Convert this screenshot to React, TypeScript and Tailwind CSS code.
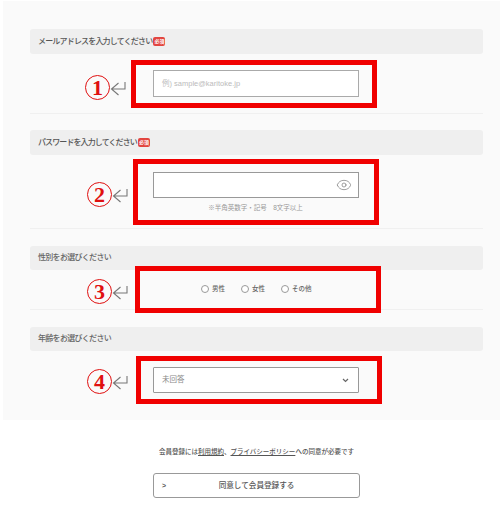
import React from "react";
import { Eye } from "lucide-react";

const font = { fontFamily: '"Liberation Sans", "Noto Sans CJK JP", sans-serif' };

// red annotation frame + circled number + return arrow drawn over a form row
const Marker = ({ num, top, numTop, frameLeft, frameHeight, numLeft }: { num: number; top: number; numTop: number; frameLeft: number; frameHeight: number; numLeft: number }) => (
  <>
    <div
      className="absolute w-[246px] border-[5px] border-[#f00000] pointer-events-none"
      style={{ top, left: frameLeft, height: frameHeight }}
    />
    <div className="absolute flex items-center" style={{ top: numTop, left: numLeft }}>
      <span
        className="flex h-[25px] w-[25px] items-center justify-center rounded-full border-[1.5px] border-[#e01010] text-[22px] font-bold leading-none text-[#e01010]"
        style={{ fontFamily: '"Liberation Serif", serif' }}
      >
        {num}
      </span>
      <svg width="16" height="15" viewBox="0 0 16 15" fill="none" stroke="#777" strokeWidth="1.1" className="mt-[2px]">
        <path d="M15 1v7H1.5M8.500 2 1.500 8l7 6" />
      </svg>
    </div>
  </>
);

const Required = () => (
  <span className="ml-[1px] inline-flex h-[9px] w-[12px] items-center justify-center rounded-[2px] bg-[#e2453f] text-[5px] font-bold leading-none tracking-normal text-white">
    必須
  </span>
);

const Head = ({ children, className = "" }: { children: React.ReactNode; className?: string }) => (
  <div className={"flex items-center rounded-[3px] bg-[#efefef] pl-[8px] text-[8px] font-medium " + className}>
    {children}
  </div>
);

const Radio = ({ label, className = "" }: { label: string; className?: string }) => (
  <label className={"flex items-center gap-[3px] " + className}>
    <span className="h-[8px] w-[8px] rounded-full border border-[#999] bg-white" />
    <span>{label}</span>
  </label>
);

export default function App() {
  return (
    <div className="relative h-[507px] w-[500px] overflow-hidden bg-white" style={font}>
      {/* form panel */}
      <div className="ml-[3px] mt-[1px] h-[419px] bg-[#fafafa] pl-[27px] pr-[17px] pt-[28px]">
        {/* mail */}
        <Head className="h-[25px] tracking-[-0.82px] text-[#555]">
          メールアドレスを入力してください
          <Required />
        </Head>
        <div className="ml-[123px] mt-[16px] flex h-[27px] w-[206px] items-center border border-[#aaa] bg-white pl-[8px] text-[7.5px] text-[#bbb]">
          例) sample@karitoke.jp
        </div>
        <div className="mt-[16px] h-px bg-[#f0f0f0]" />

        {/* password */}
        <Head className="mt-[16px] h-[25px] tracking-[-0.9px] text-[#555]">
          パスワードを入力してください
          <Required />
        </Head>
        <div className="ml-[123px] mt-[17px] flex h-[26px] w-[206px] items-center justify-end border border-[#999] bg-white pr-[6px]">
          <Eye size={16} strokeWidth={1.2} className="text-[#888]" />
        </div>
        <p className="ml-[123px] mt-[5px] w-[205px] text-center text-[6.5px] leading-[9px] text-[#999]">
          ※半角英数字・記号　8文字以上
        </p>
        <div className="mt-[16px] h-px bg-[#f0f0f0]" />

        {/* gender */}
        <Head className="mt-[17px] h-[24px] tracking-[-0.7px] text-[#666]">性別をお選びください</Head>
        <div className="ml-[171px] mt-[15px] flex h-[8px] items-center text-[6.5px] font-medium text-[#666]">
          <Radio label="男性" />
          <Radio label="女性" className="ml-[16px]" />
          <Radio label="その他" className="ml-[16px]" />
        </div>
        <div className="mt-[16px] h-px bg-[#f0f0f0]" />

        {/* age */}
        <Head className="mt-[17px] h-[24px] tracking-[-0.7px] text-[#666]">年齢をお選びください</Head>
        <div className="ml-[123px] mt-[16px] flex h-[26px] w-[206px] items-center justify-between rounded-[1px] border border-[#999] bg-white pl-[8px] pr-[9px] text-[7.5px] text-[#888]">
          未回答
          <svg width="7" height="5" viewBox="0 0 7 5" fill="none" stroke="#666" strokeWidth="1.2">
            <path d="M1 1 3.500 3.500 6 1" />
          </svg>
        </div>
      </div>

      {/* footer */}
      <p className="mt-[27px] pl-[159px] text-[6.5px] font-medium leading-[9px] text-[#555]">
        会員登録には<span className="underline">利用規約</span>、<span className="underline">プライバシーポリシー</span>への同意が必要です
      </p>
      <button className="relative ml-[153px] mt-[17px] flex h-[25px] w-[207px] items-center justify-center rounded-[3px] border border-[#999] bg-white text-[7.6px] font-medium text-[#555]">
        <span className="absolute left-[8px] text-[7px] font-bold leading-none">&gt;</span>
        同意して会員登録する
      </button>

      <Marker num={1} top={60} numTop={75} frameLeft={131} frameHeight={48} numLeft={85} />
      <Marker num={2} top={159} numTop={182} frameLeft={133} frameHeight={66} numLeft={87} />
      <Marker num={3} top={266} numTop={279} frameLeft={135} frameHeight={47} numLeft={87} />
      <Marker num={4} top={356} numTop={369} frameLeft={136} frameHeight={48} numLeft={87} />
    </div>
  );
}
